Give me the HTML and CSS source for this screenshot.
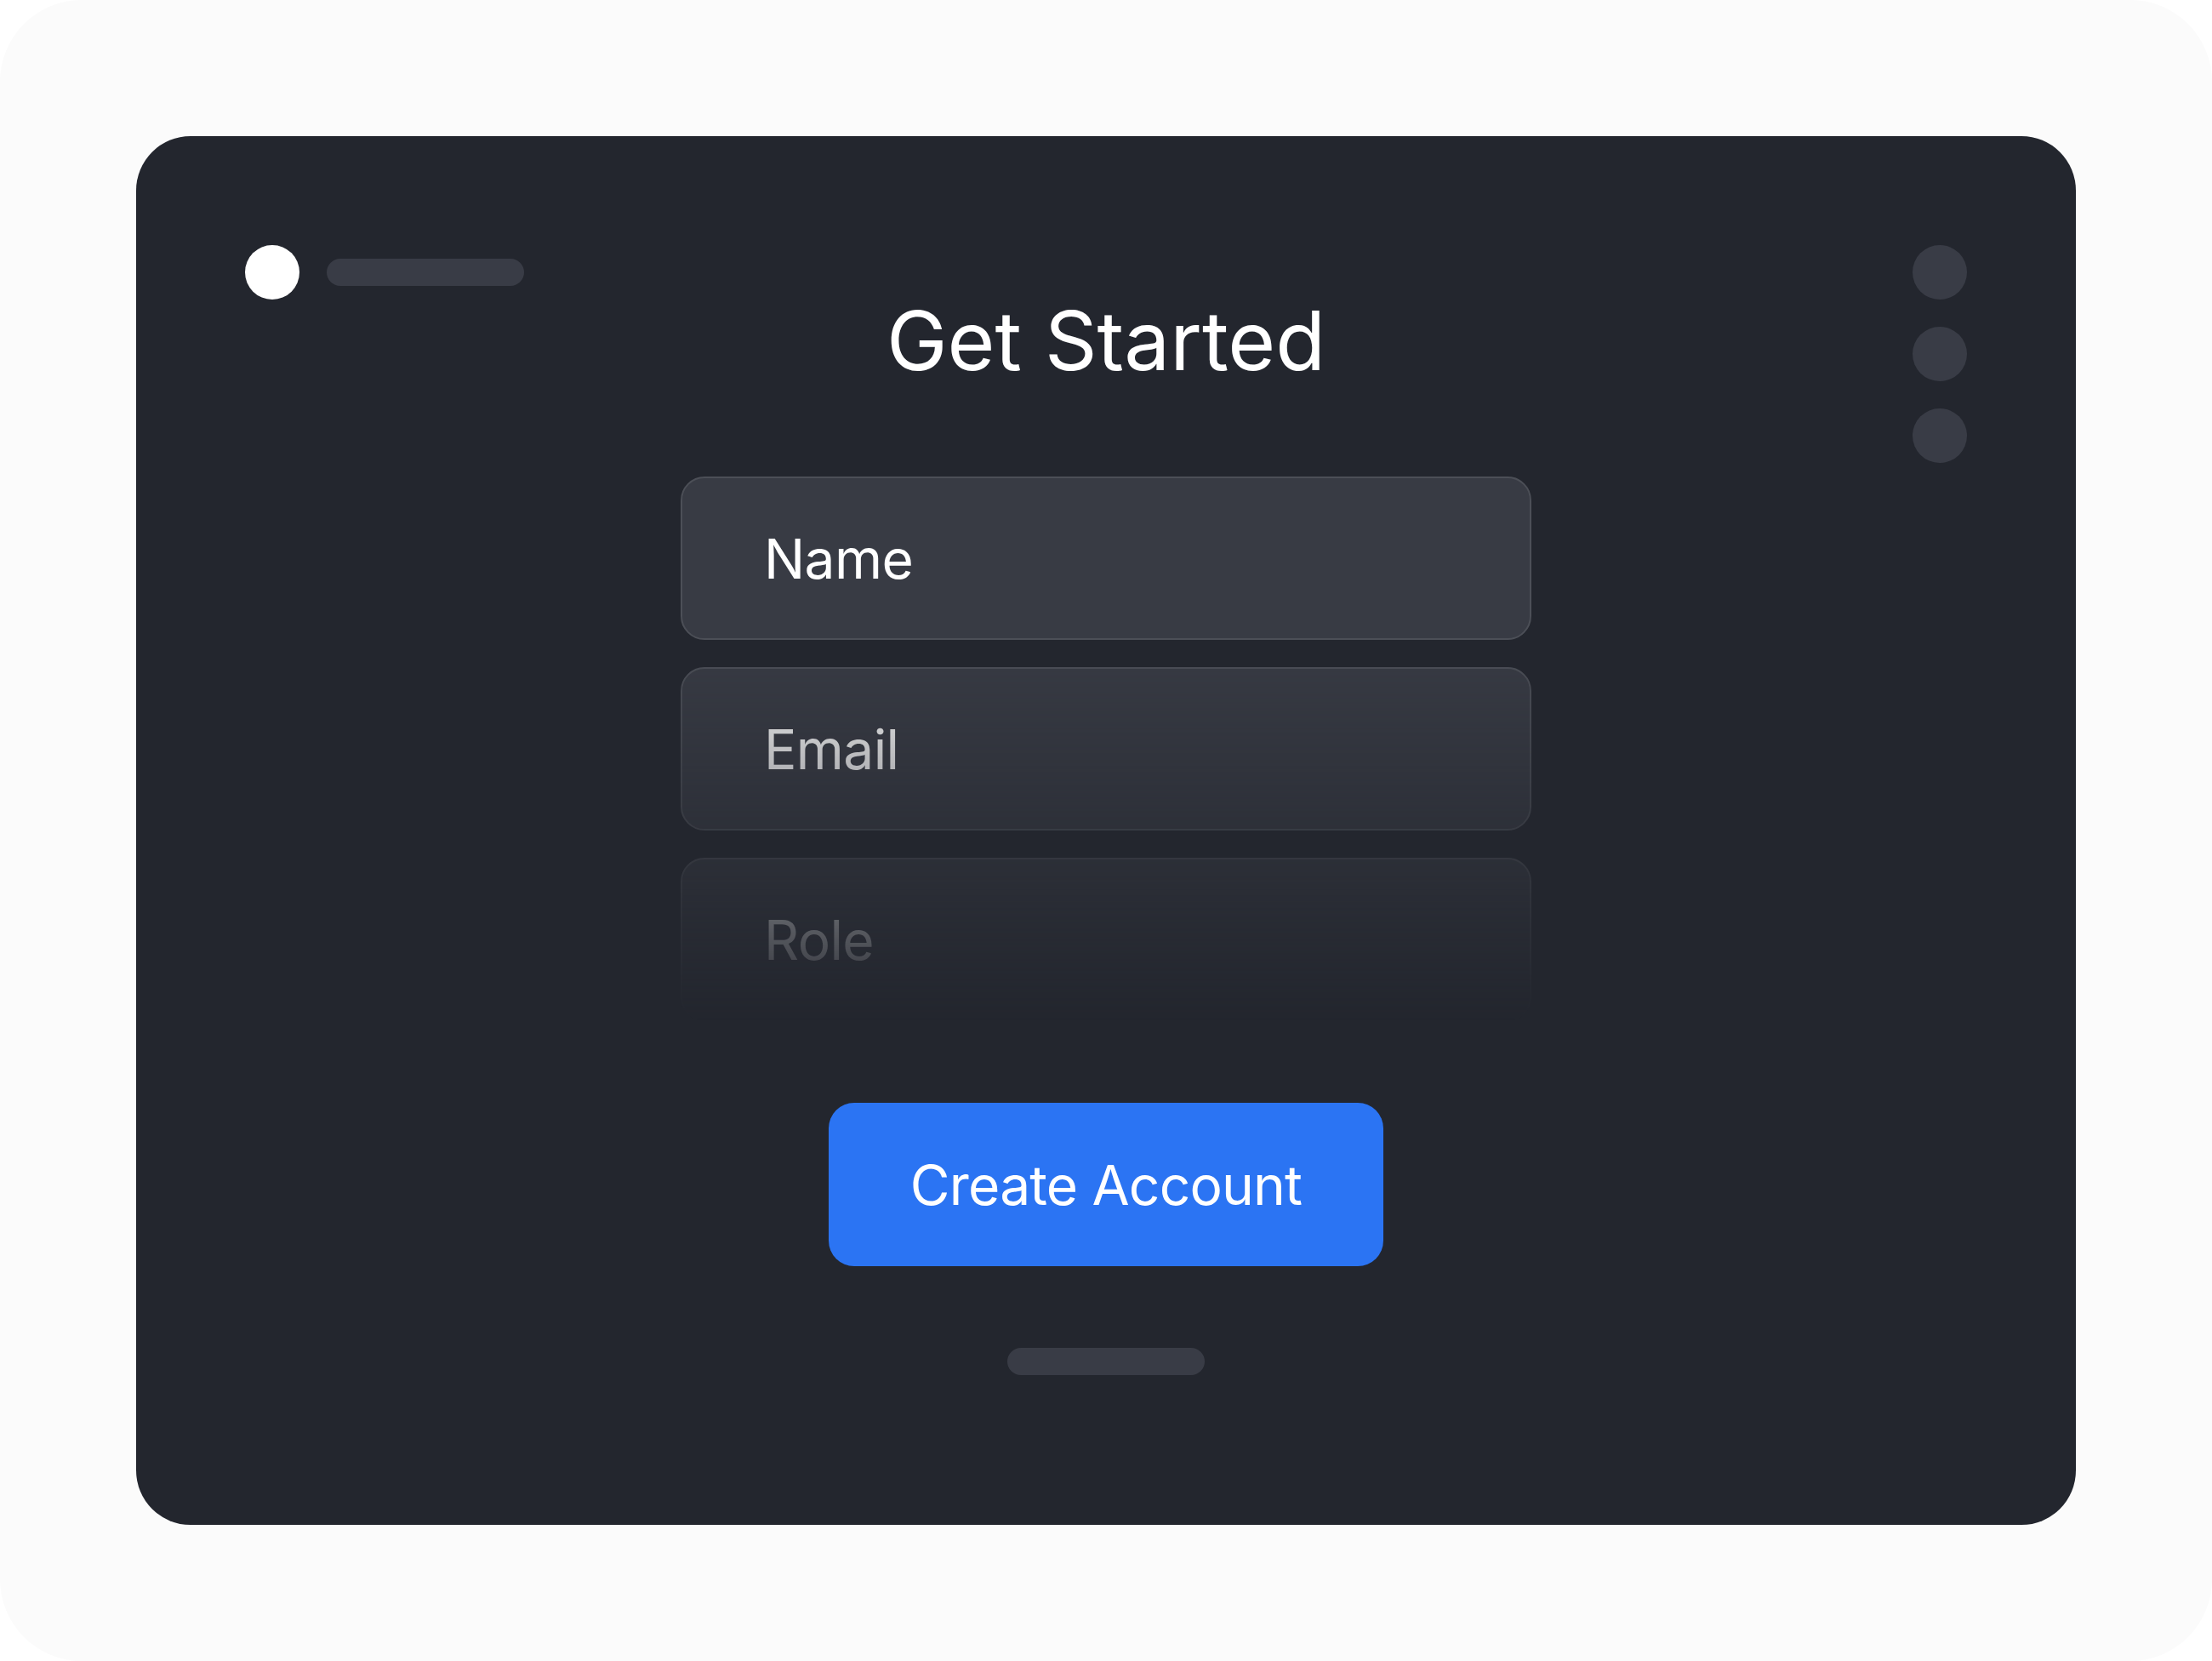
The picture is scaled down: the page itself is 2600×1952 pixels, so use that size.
FILE: index.html
```html
<!DOCTYPE html>
<html lang="en">
<head>
    <meta charset="UTF-8">
    <meta name="viewport" content="width=device-width, initial-scale=1.0">
    <title>Get Started</title>
    <link rel="stylesheet" href="styles.css">
</head>
<body>
    <div class="frame">
        <div class="card">
            <div class="header">
                <div class="brand">
                    <span class="brand-dot"></span>
                    <span class="brand-bar"></span>
                </div>
                <h1>Get Started</h1>
                <div class="steps">
                    <span class="step"></span>
                    <span class="step"></span>
                    <span class="step"></span>
                </div>
            </div>

            <div class="fields">
                <div class="field">Name</div>
                <div class="field">Email</div>
                <div class="field">Role</div>
            </div>

            <button class="submit">Create Account</button>

            <div class="handle"></div>
        </div>
    </div>
</body>
</html>
```

FILE: styles.css
```css
body {
    margin: 0;
    padding: 0;
    background-color: #ffffff;
    font-family: 'Inter', 'Noto Sans', sans-serif;
}

.frame {
    width: 2600px;
    height: 1952px;
    box-sizing: border-box;
    padding: 160px;
    background-color: #fbfbfb;
    border-radius: 96px;
}

.card {
    height: 100%;
    box-sizing: border-box;
    padding: 128px;
    background-color: #23262e;
    border-radius: 64px;
    display: flex;
    flex-direction: column;
    align-items: center;
}

.header {
    width: 100%;
    display: grid;
    grid-template-columns: 1fr auto 1fr;
    align-items: start;
}

.brand {
    display: flex;
    align-items: center;
    gap: 32px;
}

.brand-dot {
    width: 64px;
    height: 64px;
    border-radius: 50%;
    background-color: #ffffff;
}

.brand-bar {
    width: 232px;
    height: 32px;
    border-radius: 16px;
    background-color: #393c46;
}

h1 {
    margin: 64px 0 0;
    font-size: 96px;
    line-height: 96px;
    font-weight: 400;
    color: #ffffff;
}

.steps {
    justify-self: end;
    display: flex;
    flex-direction: column;
    gap: 32px;
}

.step {
    width: 64px;
    height: 64px;
    border-radius: 50%;
    background-color: #393c46;
}

.fields {
    margin-top: 16px;
    width: 1000px;
    display: flex;
    flex-direction: column;
    gap: 32px;
    -webkit-mask-image: linear-gradient(to bottom, #000 30%, transparent 100%);
    mask-image: linear-gradient(to bottom, #000 30%, transparent 100%);
}

.field {
    height: 192px;
    box-sizing: border-box;
    padding: 0 96px;
    display: flex;
    align-items: center;
    background-color: #383b44;
    border: 2px solid #4c4f57;
    border-radius: 28px;
    font-size: 64px;
    letter-spacing: -0.6px;
    color: #ffffff;
}

.submit {
    margin-top: 96px;
    height: 192px;
    padding: 0 96px;
    font-family: inherit;
    font-size: 64px;
    letter-spacing: -0.8px;
    color: #ffffff;
    background-color: #2b74f3;
    border: none;
    border-radius: 30px;
    cursor: pointer;
}

.handle {
    margin-top: 96px;
    width: 232px;
    height: 32px;
    border-radius: 16px;
    background-color: #393c46;
}
```
